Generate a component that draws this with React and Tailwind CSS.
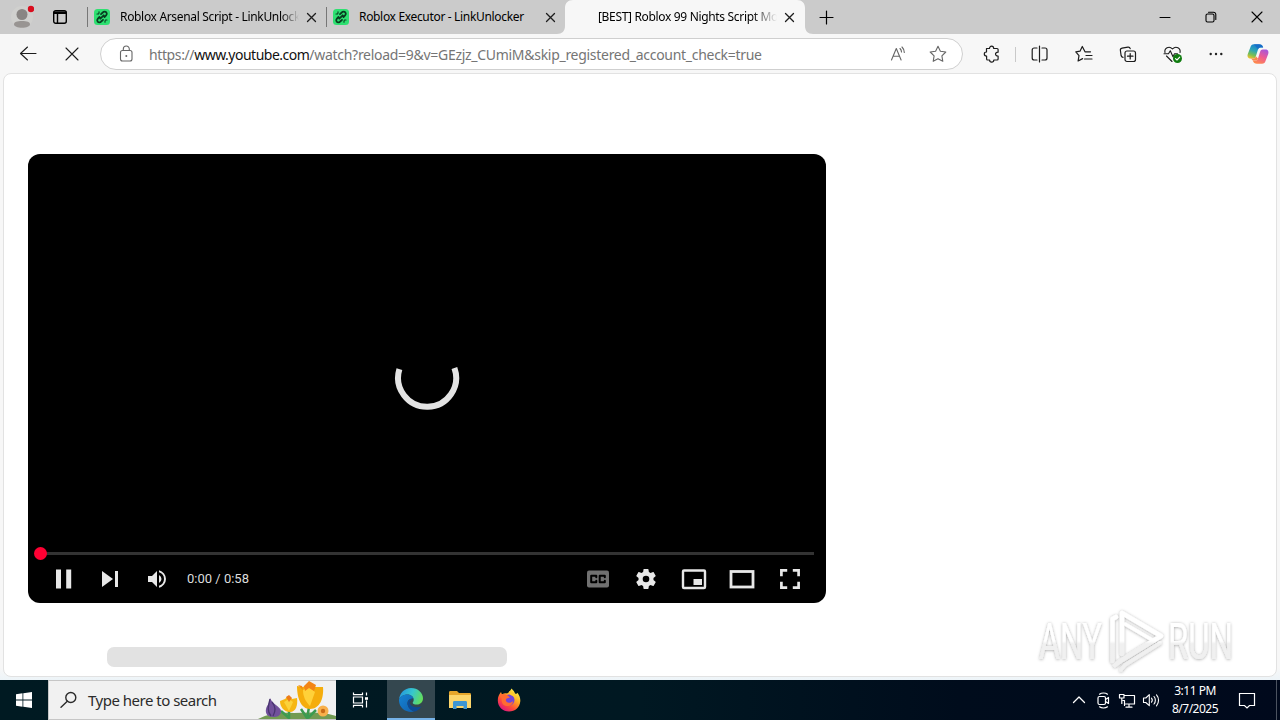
import React from "react";

function Icon({ size = 24, sw = 1.2, className = "", children }) {
  return (
    <svg
      width={size}
      height={size}
      viewBox={`0 0 ${size} ${size}`}
      fill="none"
      stroke="currentColor"
      strokeWidth={sw}
      strokeLinecap="round"
      strokeLinejoin="round"
      className={`shrink-0 ${className}`}
    >
      {children}
    </svg>
  );
}

function Slot({ className = "w-11", children }) {
  return <div className={`flex h-full shrink-0 items-center justify-center ${className}`}>{children}</div>;
}

function Favicon() {
  return (
    <Icon size={16} sw={1.8} className="text-[#083d20]">
      <rect width="16" height="16" rx="3.5" fill="#2ee071" stroke="none" />
      <path d="M7 5.200 8.800 3.500a2.200 2.200 0 0 1 3.600 0c.7 1 .5 2-.3 2.900L10.500 8M9 10.800l-1.800 1.700a2.200 2.200 0 0 1-3.600 0c-.7-1-.5-2 .3-2.900L5.500 8M9.700 6.300 6.300 9.700" />
      <path d="M3 5h1.500M5 2.800v1.500M13 11h-1.500M11 13.200v-1.500" strokeWidth="1.100" />
    </Icon>
  );
}

function CloseTab() {
  return (
    <Icon size={12} sw={1.3} className="text-[#1d1d1d]">
      <path d="M2.500 2.500l8 8M10.500 2.500l-8 8" />
    </Icon>
  );
}

function InactiveTab({ title, fade }) {
  return (
    <div className="flex h-[34px] w-[239px] shrink-0 items-center">
      <div className="h-5 w-px bg-[#777]" />
      <div className="ml-[6px]">
        <Favicon />
      </div>
      <div
        className={
          "ml-[10px] w-[179px] overflow-hidden whitespace-nowrap text-[12px] tracking-[-0.33px] leading-4 text-[#000]" +
          (fade ? " [mask-image:linear-gradient(to_right,#000_90%,transparent)]" : "")
        }
      >
        {title}
      </div>
      <div className="ml-[6px]">
        <CloseTab />
      </div>
    </div>
  );
}

function TabStrip() {
  return (
    <div className="flex h-[34px] items-center bg-[#cbcbcb] text-black">
      <Slot className="w-11">
        <Icon size={24} sw={0}>
          <circle cx="12" cy="12" r="11" fill="#d0d0ce" />
          <circle cx="12" cy="9.500" r="5.500" fill="#898583" />
          <path d="M4 19.200c0-2.200 3-3.200 8-3.200s8 1 8 3.200c0 2-3.500 3.600-8 3.600s-8-1.600-8-3.600z" fill="#989492" />
          <circle cx="21" cy="4" r="3.200" fill="#d90d1e" />
        </Icon>
      </Slot>
      <Slot className="w-8">
        <Icon size={16} sw={1.400}>
          <rect x="1.700" y="1.700" width="12.600" height="12.600" rx="2" />
          <path d="M2 3.200h12M2 4.300h12M5.500 4.500v9.500" />
        </Icon>
      </Slot>
      <div className="ml-[11px] flex">
        <InactiveTab title="Roblox Arsenal Script - LinkUnlocker" fade />
        <InactiveTab title="Roblox Executor - LinkUnlocker" />
      </div>
      <svg width="256" height="34" viewBox="0 0 256 34" className="-ml-[8px] shrink-0">
        <path d="M0 34c5 0 8-3 8-8V8c0-5 3-8 8-8h224c5 0 8 3 8 8v18c0 5 3 8 8 8z" fill="#f7f7f7" />
      </svg>
      <div className="-ml-[215px] flex w-[207px] shrink-0 items-center">
        <div className="w-[179px] overflow-hidden whitespace-nowrap text-[12px] leading-4 tracking-[-0.33px] text-[#000] [mask-image:linear-gradient(to_right,#000_86%,transparent)]">
          [BEST] Roblox 99 Nights Script Mobile
        </div>
        <div className="ml-[6px]">
          <CloseTab />
        </div>
      </div>
      <Slot className="w-[42px]">
        <Icon size={16}>
          <path d="M8.500 2v13M2 8.500h13" />
        </Icon>
      </Slot>
      <div className="flex-1" />
      <Slot className="w-[46px]">
        <Icon size={12} sw={1}>
          <path d="M1 6.500h10" />
        </Icon>
      </Slot>
      <Slot className="w-[46px]">
        <Icon size={12} sw={1.100}>
          <rect x="1" y="3" width="8" height="8" rx="1.500" />
          <path d="M3.500 1.200h5a2.300 2.300 0 0 1 2.300 2.300v5" />
        </Icon>
      </Slot>
      <Slot className="w-[46px]">
        <Icon size={12} sw={1.100}>
          <path d="M1 1l10 10M11 1L1 11" />
        </Icon>
      </Slot>
    </div>
  );
}

function Toolbar() {
  return (
    <div className="flex h-10 items-center bg-[#f7f7f7] pl-[6px] text-[#1c1c1c]">
      <Slot>
        <Icon sw={1.100}>
          <path d="M4.500 11.500h15.500M11.500 5 4.500 11.500l7 6.500" />
        </Icon>
      </Slot>
      <Slot>
        <Icon sw={1.100}>
          <path d="M6 6l12 12M18 6L6 18" />
        </Icon>
      </Slot>
      <div className="ml-[6px] flex h-8 w-[863px] shrink-0 items-center rounded-full border border-[#cfcfcf] bg-white pl-[9px] pr-1 text-[#666]">
        <Slot className="w-8">
          <Icon sw={1.100}>
            <rect x="6.500" y="8.500" width="11.500" height="10.500" rx="2" />
            <path d="M9.300 8.500V7a3 3 0 0 1 6 0v1.500" />
            <circle cx="12.300" cy="14" r="1" fill="currentColor" stroke="none" />
          </Icon>
        </Slot>
        <div className="ml-[7px] flex-1 whitespace-nowrap pt-px text-[14px] leading-5 tracking-[-0.29px] text-[#757575]">
          <span className="tracking-[-0.39px]">https://</span>
          <span className="tracking-[-0.5px] text-[#111]">www.youtube.com</span>
          /watch?reload=9&amp;v=GEzjz_CUmiM&amp;skip_registered_account_check=true
        </div>
        <Slot className="w-10">
          <Icon size={20} sw={1.100}>
            <path d="M3.500 16 8.300 4.500 13.100 16M5.200 12.300h6.200" />
            <path d="M12 4.500c1 1 1.500 2 1.500 3.500M14 3c1.500 1.500 2.300 3 2.300 5.500" />
          </Icon>
        </Slot>
        <Slot className="w-10">
          <Icon size={20} sw={1.100}>
            <path d="M10 2.200l2.400 5 5.400.8-3.900 3.800.9 5.500-4.800-2.600-4.800 2.600.9-5.500L2.200 8l5.400-.8z" />
          </Icon>
        </Slot>
      </div>
      <Slot className="ml-[6px] w-11">
        <Icon size={20} sw={1.200}>
          <path d="M5.500 4.500h3c0-1.400.9-2.300 2.100-2.300s2.100.9 2.100 2.300h3.400c.6 0 1 .4 1 1v2.700c-1.600-.1-2.600.7-2.600 1.900s1 2 2.600 1.900v3c0 .6-.4 1-1 1h-3.300c0 1.300-.9 2.100-2.100 2.100s-2.100-.8-2.100-2.100h-2c-.6 0-1-.4-1-1v-3c-1.500 0-2.300-.8-2.300-2s.8-2 2.200-2z" />
        </Icon>
      </Slot>
      <div className="ml-[2px] h-[15px] w-px bg-[#c9c9c9]" />
      <Slot className="ml-[2px] w-11">
        <Icon size={20} sw={1.200}>
          <path d="M7 4H4.200a2 2 0 0 0-2 2v8a2 2 0 0 0 2 2H7M12 4h3a2 2 0 0 1 2 2v8a2 2 0 0 1-2 2h-3M9.500 2v16" />
        </Icon>
      </Slot>
      <Slot>
        <Icon size={20} sw={1.200}>
          <path d="M16.500 7.800H11L8.300 2.500 6 7.200l-4.200.7 3.200 3.700-.9 5.400 4.500-2.400M12 11.500h6M10.500 15H18" />
        </Icon>
      </Slot>
      <Slot>
        <Icon size={20} sw={1.200}>
          <path d="M5 13.300c-1.100-.2-1.700-.9-1.900-1.800l-.7-5c-.2-1.100.6-2.200 1.700-2.400l5.800-1c1.100-.2 2 .4 2.300 1.500" />
          <rect x="7" y="7" width="10.500" height="10.500" rx="2" />
          <path d="M12.200 9.500v5.500M9.500 12.200H15" />
        </Icon>
      </Slot>
      <Slot>
        <Icon size={20} sw={1.100}>
          <path d="M3 8.500C2 4.500 7 1.200 10.500 5c3.500-3.800 8.500-.5 7.500 3.500M4.500 12l5.500 5.500M2 9.800h4.500l1.800-3 2.700 6 1.500-3h3" />
          <circle cx="15.500" cy="14.500" r="4.500" fill="#107c10" stroke="none" />
          <path d="M13.500 14.600l1.500 1.400 2.700-2.800" stroke="#fff" />
        </Icon>
      </Slot>
      <Slot>
        <Icon size={20} sw={0}>
          <circle cx="4.700" cy="10" r="1.200" fill="#222" />
          <circle cx="10" cy="10" r="1.200" fill="#222" />
          <circle cx="15.300" cy="10" r="1.200" fill="#222" />
        </Icon>
      </Slot>
      <Slot className="w-10">
        <svg width="24" height="24" viewBox="0 0 24 24">
          <defs>
            <linearGradient id="cpa" x1="0.600" y1="0" x2="0.200" y2="1">
              <stop offset="0" stopColor="#147bd1" />
              <stop offset="0.450" stopColor="#2ea6b5" />
              <stop offset="0.750" stopColor="#79bf55" />
              <stop offset="1" stopColor="#f0c22e" />
            </linearGradient>
            <linearGradient id="cpb" x1="0.800" y1="0" x2="0.300" y2="1">
              <stop offset="0" stopColor="#a456dd" />
              <stop offset="0.500" stopColor="#ee5c92" />
              <stop offset="1" stopColor="#ff8a4c" />
            </linearGradient>
          </defs>
          <path d="M13 2.200H8c-2 0-3 1-3.700 3.200L1.800 12c-.9 2.700.3 4.500 2.800 4.500h2.600c1.400 0 2.200-.8 2.700-2.300L12 7.600c.5-1.500 1.300-2.200 2.700-2.200h2.500C16.500 3.200 15.300 2.200 13 2.200z" fill="url(#cpa)" />
          <path d="M11 21.800h5c2 0 3-1 3.700-3.200l2.500-6.600c.9-2.700-.3-4.500-2.800-4.500h-2.600c-1.400 0-2.200.8-2.700 2.300L12 16.400c-.5 1.500-1.300 2.200-2.700 2.200H6.800c.7 2.200 1.900 3.200 4.200 3.200z" fill="url(#cpb)" />
          <path d="M8 2.200h5c2.300 0 3.500 1 4.200 3.200h-2.500c-1.400 0-2.200.7-2.700 2.200" fill="#1765c5" opacity="0.700" />
          <path d="M6.800 18.600c-.8-1.600-1.600-2.100-3-2.200 0 0 .8.100 3.400.1 1.400 0 2.200-.8 2.700-2.300l2.100 2.200c-.5 1.500-1.300 2.200-2.700 2.200z" fill="#f98b4c" />
        </svg>
      </Slot>
    </div>
  );
}

function Player() {
  return (
    <div className="flex h-[449px] w-[798px] flex-col rounded-xl bg-black text-[#e8e8e8]">
      <div className="flex h-[392px] justify-center pt-[189px]">
        <svg width="70" height="70" viewBox="0 0 70 70">
          <path d="M7.400 26.200A29 29 0 1 0 62.400 25" fill="none" stroke="#e4e4e4" strokeWidth="6" />
        </svg>
      </div>
      <div className="flex h-[15px] items-center pl-[6px] pr-3">
        <div className="z-10 h-[13px] w-[13px] rounded-full bg-[#ff0033]" />
        <div className="-ml-px h-[3px] flex-1 bg-[#333]" />
      </div>
      <div className="flex h-[36px] items-center pl-[12px] pr-[12px]">
        <Slot className="w-[47px]">
          <Icon size={24} sw={0}>
            <path d="M4 2.500h5v19H4zM14.200 2.500h5v19h-5z" fill="currentColor" />
          </Icon>
        </Slot>
        <Slot className="w-[46px]">
          <Icon size={24} sw={0}>
            <path d="M4 4v16l11-8zM17 4h3v16h-3z" fill="currentColor" />
          </Icon>
        </Slot>
        <Slot className="w-[48px]">
          <Icon size={24} sw={0}>
            <path d="M3 9v6h4l5 5V4L7 9H3zm13.500 3A4.500 4.500 0 0 0 14 7.970v8.050A4.500 4.500 0 0 0 16.500 12zM14 3.230v2.060a7 7 0 0 1 0 13.420v2.060a9 9 0 0 0 0-17.540z" fill="currentColor" />
          </Icon>
        </Slot>
        <div className="ml-[6px] flex-1 whitespace-nowrap font-[Roboto] text-[13px] leading-4 text-[#ddd]">0:00 / 0:58</div>
        <Slot className="w-12">
          <Icon size={24} sw={0}>
            <rect x="1" y="3.500" width="22" height="17" rx="2" fill="#717171" />
            <path d="M10.300 10.300V8.800H5.200v6.400h5.100v-1.500M18.800 10.300V8.800h-5.100v6.400h5.100v-1.500" stroke="#000" strokeWidth="2" fill="none" />
          </Icon>
        </Slot>
        <Slot className="w-12">
          <Icon size={24} sw={0}>
            <path d="M19.430 12.980c.04-.32.070-.64.070-.98s-.03-.66-.07-.98l2.110-1.650c.19-.15.24-.42.120-.64l-2-3.460c-.12-.22-.39-.3-.61-.22l-2.490 1c-.52-.4-1.080-.73-1.690-.98l-.38-2.650A.49.490 0 0 0 14 2h-4c-.25 0-.46.180-.49.420l-.38 2.650c-.61.250-1.170.590-1.690.980l-2.490-1c-.23-.09-.49 0-.61.220l-2 3.460c-.13.220-.07.490.12.640l2.110 1.650c-.04.320-.07.650-.07.980s.03.660.07.980l-2.110 1.650c-.19.150-.24.420-.12.640l2 3.460c.12.220.39.300.61.220l2.490-1c.52.400 1.080.730 1.690.980l.38 2.650c.03.240.24.420.49.420h4c.25 0 .46-.18.49-.42l.38-2.650c.61-.25 1.170-.59 1.690-.98l2.490 1c.23.090.49 0 .61-.22l2-3.460c.12-.22.07-.49-.12-.64l-2.110-1.650zM12 15.300a3.300 3.300 0 1 1 0-6.600 3.300 3.300 0 0 1 0 6.600z" fill="currentColor" />
          </Icon>
        </Slot>
        <Slot className="w-12">
          <Icon size={26} sw={2.400}>
            <rect x="2" y="4.500" width="22" height="17.500" rx="1" />
            <path d="M12.500 13h8.500v6h-8.500z" fill="currentColor" stroke="none" />
          </Icon>
        </Slot>
        <Slot className="w-12">
          <svg width="26" height="26" viewBox="0 0 26 26">
            <rect x="2" y="5.500" width="22" height="15.500" fill="none" stroke="currentColor" strokeWidth="2.800" />
          </svg>
        </Slot>
        <Slot className="w-12">
          <svg width="24" height="24" viewBox="0 0 24 24" fill="none" stroke="currentColor" strokeWidth="2.700">
            <path d="M3.400 9.200V3.400h5.800M14.800 3.400h5.800v5.800M20.600 14.800v5.800h-5.800M9.200 20.600H3.400v-5.800" />
          </svg>
        </Slot>
      </div>
    </div>
  );
}

function Watermark() {
  return (
    <svg width="212" height="74" viewBox="0 0 212 74" className="absolute left-[1034px] top-[606px]">
      <defs>
        <filter id="halo" x="-10%" y="-10%" width="120%" height="120%">
          <feDropShadow dx="0" dy="0.500" stdDeviation="1.700" floodColor="#000" floodOpacity="0.360" />
        </filter>
        <linearGradient id="sheen" gradientUnits="userSpaceOnUse" x1="0" y1="0" x2="0" y2="70">
          <stop offset="0.500" stopColor="#fff" />
          <stop offset="0.540" stopColor="#f0f0f0" />
        </linearGradient>
      </defs>
      <g filter="url(#halo)" fill="url(#sheen)" fontFamily="Roboto" fontSize="50">
        <text x="5" y="53" textLength="63" lengthAdjust="spacingAndGlyphs">ANY</text>
        <text x="134" y="53" textLength="65" lengthAdjust="spacingAndGlyphs">RUN</text>
      </g>
      <g filter="url(#halo)" fill="none" stroke="url(#sheen)" strokeWidth="4.500" strokeLinejoin="round" strokeLinecap="round">
        <path d="M78.500 55V13l3.500-2" />
        <path d="M88 48V7l39 23-39 24-7 5" />
        <path d="M91 18l29 17M126 37 91 59l-4 5" strokeWidth="3.500" />
      </g>
    </svg>
  );
}

function Flowers() {
  return (
    <svg width="80" height="38" viewBox="0 0 80 38" className="shrink-0">
      <path d="M2 38C14 32 24 31 38 32c16-1 32-1 42 3v3z" fill="#729b52" />
      <path d="M33 29v9M53 26l-2 12M60 29l-8 8M25 30l8 7M45 28l6 9" stroke="#3c9b50" strokeWidth="2.500" />
      <path d="M14 17c2 6 11 9 11 13 0 5-4 6-8 6-5 0-8-3-7-8 1-4 4-6 4-11z" fill="#71509b" />
      <path d="M14 18c-2 8-3 12 1 17M16 21c4 5 4 9 1 14" stroke="#493570" strokeWidth="1.300" fill="none" />
      <path d="M24 20l5-2 3-3 4 3 5-1c1 7-1 14-7 14s-10-5-10-11z" fill="#f6b713" />
      <path d="M28 21l5-3 4 3-4 9z" fill="#fbd23b" />
      <path d="M30 16l3-2 3 3-3 4z" fill="#ed7c19" />
      <path d="M41 5l6 1 5-3 6 3 9 0c1 11-3 22-13 22-9 0-13-11-13-23z" fill="#f5ad0c" />
      <path d="M47 9l6-3 6 5-5 14c-4-4-7-9-7-16z" fill="#ffd139" />
      <path d="M48 5l5-5 7 4-2 6-5-3-4 3zM42 4l4 1 1 4z" fill="#f38515" />
      <circle cx="67" cy="30" r="5.500" fill="#f8b04b" />
      <circle cx="67" cy="30" r="2.200" fill="#c96c17" />
    </svg>
  );
}

function Taskbar() {
  return (
    <div className="flex h-10 bg-[linear-gradient(to_right,#001a22_0%,#001822_50%,#000c1c_75%,#00091c_100%)] text-white">
      <Slot className="w-12">
        <svg width="16" height="16" viewBox="0 0 16 16" fill="#fff">
          <path d="M0 2.200 6.500 1.300v6.300H0zM7.300 1.200 16 0v7.600H7.300zM0 8.400h6.500v6.300L0 13.800zM7.300 8.400H16V16l-8.700-1.200z" />
        </svg>
      </Slot>
      <div className="flex w-72 shrink-0 items-center border border-r-0 border-[#c6c6c6] bg-[#f1f1f1] text-[#2b2b2b]">
        <Slot className="w-[39px]">
          <Icon size={20} sw={1.400}>
            <circle cx="11.800" cy="7.500" r="5" />
            <path d="M8.300 11.300 2 17.300" />
          </Icon>
        </Slot>
        <div className="flex-1 whitespace-nowrap text-[15px] leading-5 tracking-[-0.5px]">Type here to search</div>
        <Flowers />
      </div>
      <Slot className="w-[51px]">
        <svg width="20" height="20" viewBox="0 0 20 20" fill="none" stroke="#fff" strokeWidth="1.200" className="-ml-[2px]">
          <path d="M2.500 2.500v2.200h9V2.500M2.500 17.500v-2.200h9v2.200M2.500 7h9v6h-9zM15.500 2.500v3M15.500 10.500v7" />
          <path d="M14 7.200h3v2.600h-3z" fill="#fff" stroke="none" />
        </svg>
      </Slot>
      <div className="flex w-12 shrink-0 items-center justify-center border-b-2 border-[#76b3e8] bg-[#34474f] pt-[2px]">
        <svg width="24" height="24" viewBox="0 0 24 24">
          <defs>
            <linearGradient id="edgeTop" x1="0" y1="0.300" x2="1" y2="0.600">
              <stop offset="0" stopColor="#2496dd" />
              <stop offset="0.500" stopColor="#36c6cf" />
              <stop offset="1" stopColor="#65df58" />
            </linearGradient>
            <linearGradient id="edgeLow" x1="0" y1="0" x2="1" y2="1">
              <stop offset="0" stopColor="#1583d3" />
              <stop offset="1" stopColor="#1160ae" />
            </linearGradient>
          </defs>
          <path d="M0 11.500C.7 5 5.600 0 12 0c7 0 12 5 12 10.200 0 4-3 6.300-6.300 6.300-2.500 0-4-.8-4-1.800 0-.7 1-1 1-3C14.700 9 12 6.500 8.500 6.500 4.500 6.500 1 8.700 0 11.500z" fill="url(#edgeTop)" />
          <path d="M0 11.500C1 8.500 4.500 6.500 8.500 6.500c3 0 5.500 1.800 6 4C10 9.700 7.800 13 8.600 16.500c.8 3.800 4 6.500 7 7C7.500 25.500-.5 20 0 11.500z" fill="url(#edgeLow)" />
          <path d="M14.500 10.500C11 10 8 13 8.600 16.500c.8 4 4 6.500 7.200 6.900 2.800-.8 5.200-2.700 6.700-5.200-3 1.600-8.500 1.400-10.800-1.200-2-2.300-.5-5.500 2.800-6.500z" fill="#0d4a94" />
        </svg>
      </div>
      <Slot className="w-[49px]">
        <svg width="22" height="20" viewBox="0 0 22 20">
          <path d="M0 2.500C0 1.500.5 1 1.500 1H8l2 2h10.500c1 0 1.500.5 1.500 1.500V18H0z" fill="#e6a62b" />
          <path d="M0 5h22v13H0z" fill="#fcd56b" />
          <path d="M4 12.500c0-1 .5-1.500 1.500-1.500h11c1 0 1.500.5 1.500 1.500V19h-3.500v-3h-7v3H4z" fill="#3e96d3" />
        </svg>
      </Slot>
      <Slot className="w-[49px]">
        <svg width="24" height="24" viewBox="0 0 24 24">
          <defs>
            <linearGradient id="fox" x1="0.850" y1="0.100" x2="0.250" y2="0.950">
              <stop offset="0" stopColor="#fff04a" />
              <stop offset="0.350" stopColor="#ffac24" />
              <stop offset="0.700" stopColor="#ff4c38" />
              <stop offset="1" stopColor="#df197b" />
            </linearGradient>
          </defs>
          <path d="M14.500.5c2 2 3 3.300 3.500 5 .7.300 2 .5 2.500-.8 2 2.800 3 5.300 2.800 8.500C22.800 19.500 18 23.500 12 23.500S.8 19 .8 12.500c0-3.500 1-6 3.200-8.500l1 2.500c1.500-1.200 3.500-1.500 5-1 1.500-1 3.500-2.500 4.500-5z" fill="url(#fox)" />
          <circle cx="12" cy="12" r="5.500" fill="#7545d8" />
          <path d="M2 8c2-2.500 5.500-2.500 8-1l3 2.500-3.300 1c-1 .5-1.200 2.200-.2 3.300 2 2 5 .8 6.500-.8 0 4-3.500 5.500-6.500 5C5 17.500 4 13 5 9.500z" fill="#ff6b31" />
          <path d="M12 3c4 0 7 3.500 6.500 8.500-1-3-3-4-5-4.500z" fill="#ffcb2d" />
        </svg>
      </Slot>
      <div className="flex-1" />
      <Slot className="w-6">
        <Icon size={16} sw={1.300}>
          <path d="M2.500 10.500 8 5l5.500 5.500" />
        </Icon>
      </Slot>
      <Slot className="w-6">
        <Icon size={18} sw={1.200}>
          <rect x="4" y="5.500" width="7.500" height="8" rx="1.500" />
          <path d="M11.500 8.500l3-2v6l-3-2M5.500 3.200c2-1.600 6-1.600 8 0M5.500 15.800c2 1.600 6 1.600 8 0" />
        </Icon>
      </Slot>
      <Slot className="w-6">
        <Icon size={18} sw={1.200}>
          <path d="M6.500 4.500h10v8.500h-9M11 13v3M8 16.200h6M1.500 3.500h4.500v3.500H1.500zM3.800 7v5.500M5 9.500h1.500v5" />
        </Icon>
      </Slot>
      <Slot className="w-6">
        <Icon size={18} sw={1.100}>
          <path d="M1.500 7h2.300l3.500-3.300v11L3.800 11.500H1.500zM9.500 7.200c.8 1 .8 3 0 4M12 5.500c1.800 2 1.800 5.500 0 7.500M14.500 3.800c2.700 3 2.700 8 0 11" />
        </Icon>
      </Slot>
      <div className="flex w-16 shrink-0 flex-col items-center pt-[2px] text-[12px] leading-[18px] tracking-[-0.5px]">
        <span>3:11 PM</span>
        <span>8/7/2025</span>
      </div>
      <Slot className="w-10">
        <Icon size={18} sw={1.200}>
          <path d="M1.500 2.500h15v12h-5L9 17l-2.500-2.500h-5z" strokeLinejoin="miter" />
        </Icon>
      </Slot>
      <div className="ml-[9px] mr-[3px] h-full w-px bg-[#4b5360]" />
    </div>
  );
}

export default function App() {
  return (
    <div className="relative flex h-[720px] w-[1280px] flex-col overflow-hidden bg-[#f7f7f7] font-['Noto_Sans','Open_Sans',sans-serif]">
      <TabStrip />
      <Toolbar />
      <div className="h-[606px] bg-[linear-gradient(to_bottom,#f7f7f7_98%,#edf4f8)] px-[3px] pb-[3px]">
        <div className="-mt-px flex h-[604px] flex-col rounded-lg border border-[#e2e2e2] bg-white pl-6 pt-20">
          <Player />
          <div className="ml-[79px] mt-11 h-5 w-[400px] shrink-0 rounded-[7px] bg-[#e2e2e2]" />
        </div>
      </div>
      <Taskbar />
      <Watermark />
    </div>
  );
}
